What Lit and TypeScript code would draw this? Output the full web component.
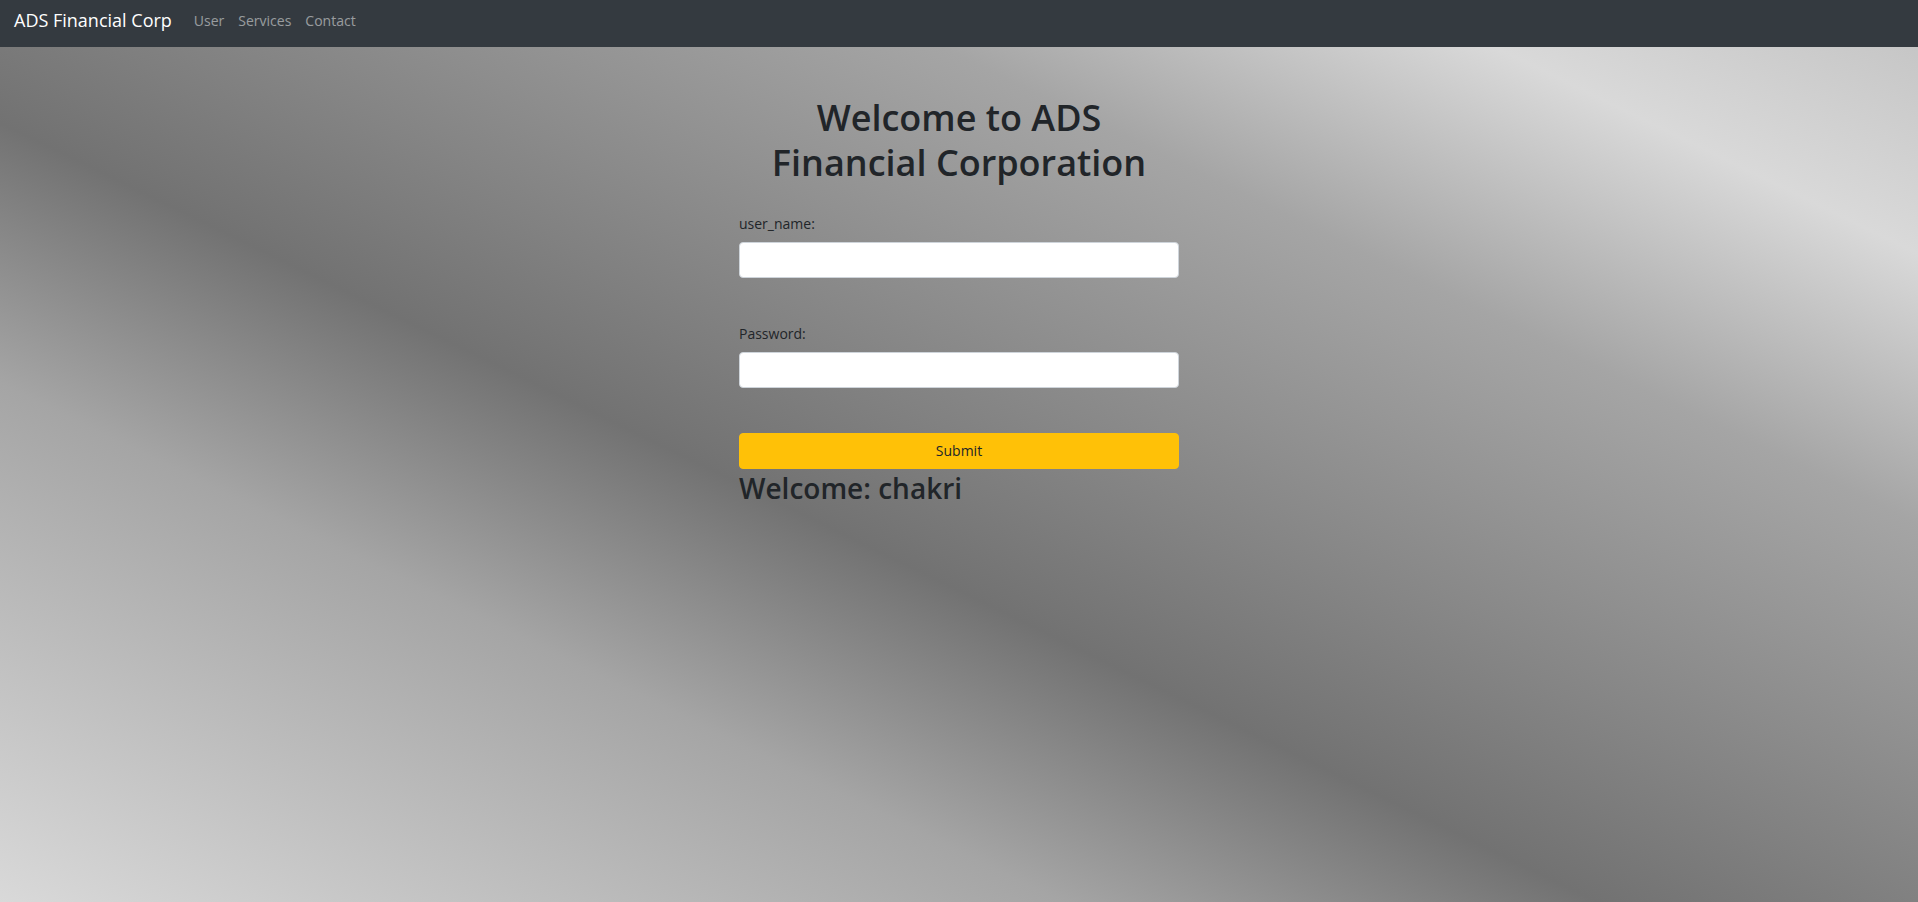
import { LitElement, html, css } from "lit";
import { customElement, state } from "lit/decorators.js";

@customElement("app-root")
export class AppRoot extends LitElement {
  static styles = css`
    :host {
      display: flex;
      flex-direction: column;
      min-height: 100vh;
      color: #212529;
      font-family: "Segoe UI", "Open Sans", "Noto Sans", sans-serif;
      font-size: 14px;
      line-height: 22px;
      background: linear-gradient(
        26deg,
        #d9d9d9 0%,
        #a5a5a5 28.2%,
        #727272 42.4%,
        #a5a5a5 71.5%,
        #d9d9d9 86.2%,
        #c2c2c2 100%
      );
    }
    * {
      box-sizing: border-box;
    }
    .navbar {
      display: flex;
      align-items: center;
      padding: 7px 14px 13px;
      background: #343a40;
    }
    .brand {
      margin-right: 15px;
      color: #fff;
      font-size: 18px;
      line-height: 27px;
      text-decoration: none;
    }
    .links {
      display: flex;
      margin: 0;
      padding: 0;
      list-style: none;
    }
    .link {
      padding: 0 7px;
      color: rgba(255, 255, 255, 0.5);
      text-decoration: none;
    }
    .panel {
      width: 100%;
      max-width: 440px;
      margin: 0 auto;
      padding: 48px 0;
    }
    .title {
      margin: 0 0 28px;
      padding: 0 24px;
      font-size: 36px;
      font-weight: 600;
      line-height: 45px;
      text-align: center;
    }
    .form {
      display: flex;
      flex-direction: column;
      gap: 45px;
    }
    .field {
      display: flex;
      flex-direction: column;
      gap: 7px;
    }
    .input {
      width: 100%;
      height: 36px;
      padding: 6px 12px;
      border: 1px solid #ced4da;
      border-radius: 4px;
      background: #fff;
      color: #495057;
      font: inherit;
    }
    .submit {
      height: 36px;
      padding: 6px 12px;
      border: 1px solid #ffc107;
      border-radius: 4px;
      background: #ffc107;
      color: #212529;
      font: inherit;
      cursor: pointer;
    }
    .greeting {
      margin: 0;
      font-size: 28px;
      font-weight: 600;
      line-height: 38px;
    }
  `;

  @state() private user = "chakri";

  private onSubmit(event: Event) {
    event.preventDefault();
    const data = new FormData(event.target as HTMLFormElement);
    this.user = String(data.get("user_name") || this.user);
  }

  render() {
    return html`
      <nav class="navbar">
        <a class="brand" href="#">ADS Financial Corp</a>
        <ul class="links">
          ${["User", "Services", "Contact"].map(
            (name) => html`<li><a class="link" href="#${name.toLowerCase()}">${name}</a></li>`
          )}
        </ul>
      </nav>
      <main class="panel">
        <h1 class="title">Welcome to ADS Financial Corporation</h1>
        <form class="form" @submit=${this.onSubmit}>
          <div class="field">
            <label for="user_name">user_name:</label>
            <input class="input" id="user_name" name="user_name" type="text" />
          </div>
          <div class="field">
            <label for="password">Password:</label>
            <input class="input" id="password" name="password" type="password" />
          </div>
          <button class="submit" type="submit">Submit</button>
        </form>
        <h2 class="greeting">Welcome: ${this.user}</h2>
      </main>
    `;
  }
}
